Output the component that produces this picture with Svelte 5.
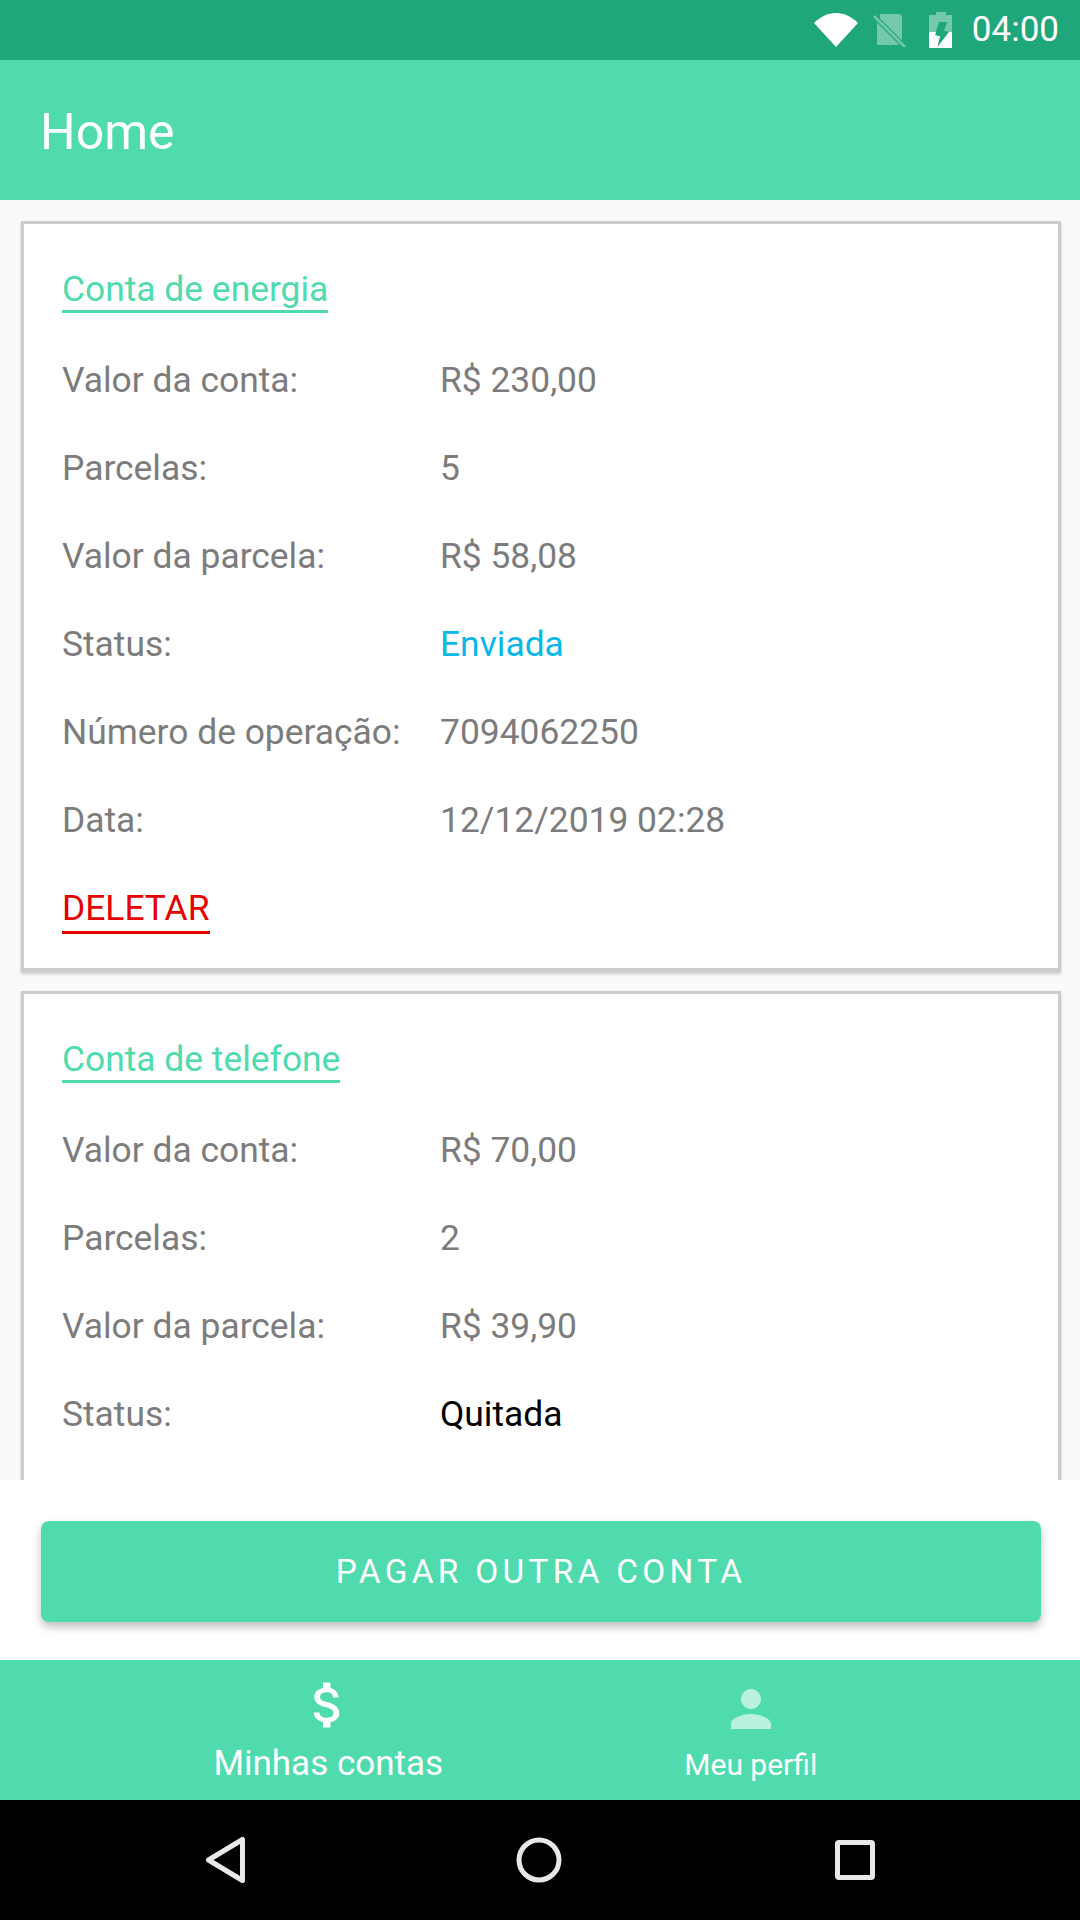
<script lang="ts">
  const bills = [
    {
      title: "Conta de energia",
      rows: [
        ["Valor da conta:", "R$ 230,00", ""],
        ["Parcelas:", "5", ""],
        ["Valor da parcela:", "R$ 58,08", ""],
        ["Status:", "Enviada", "sent"],
        ["Número de operação:", "7094062250", ""],
        ["Data:", "12/12/2019 02:28", ""],
      ],
      canDelete: true,
    },
    {
      title: "Conta de telefone",
      rows: [
        ["Valor da conta:", "R$ 70,00", ""],
        ["Parcelas:", "2", ""],
        ["Valor da parcela:", "R$ 39,90", ""],
        ["Status:", "Quitada", "paid"],
      ],
      canDelete: false,
    },
  ];
</script>

<div class="screen">
  <div class="statusbar">
    <svg class="wifi" viewBox="0 0 44 34"><path d="M0 10C6 4 13.500 0 22 0s16 4 22 10L22 34z" /></svg>
    <svg class="nosim" viewBox="0 0 33 33">
      <path d="M7 0H27l2 2V26.500L7 4.500z" />
      <path d="M4 8.500V31H26.500z" />
      <path d="M1 2l31 31" class="slash" />
    </svg>
    <svg class="battery" viewBox="0 0 23 36">
      <path fill-rule="evenodd" opacity=".38" d="M7 0h10v3h6v33H0V3h7zM10 10l-4 13.300 5 1-2.700 11L20 20l-5-1.300L18.300 10z" />
      <path d="M0 20H7L6 23.300 11 24.300 8.300 35.300 20 20H23V36H0z" />
    </svg>
    <span class="clock">04:00</span>
  </div>

  <header class="appbar">Home</header>

  <main class="list">
    {#each bills as bill}
      <section class="card">
        <h2 class="title"><span>{bill.title}</span></h2>
        {#each bill.rows as row}
          <div class="row">
            <span class="label">{row[0]}</span>
            <span class="value {row[2]}">{row[1]}</span>
          </div>
        {/each}
        {#if bill.canDelete}
          <div class="row"><span class="delete">DELETAR</span></div>
        {/if}
      </section>
    {/each}
  </main>

  <div class="action">
    <button class="pay">PAGAR OUTRA CONTA</button>
  </div>

  <nav class="tabs">
    <div class="tab active">
      <svg viewBox="0 0 24 24"><path d="M11.8 10.9c-2.270-.590-3-1.200-3-2.150 0-1.090 1.010-1.850 2.700-1.850 1.780 0 2.440.850 2.500 2.100h2.210c-.070-1.720-1.120-3.300-3.210-3.810V3h-3v2.160c-1.940.420-3.500 1.680-3.500 3.610 0 2.310 1.910 3.460 4.700 4.130 2.500.600 3 1.480 3 2.410 0 .690-.490 1.790-2.700 1.790-2.060 0-2.870-.920-2.980-2.100h-2.200c.120 2.190 1.760 3.420 3.680 3.830V21h3v-2.150c1.950-.370 3.500-1.500 3.500-3.550 0-2.840-2.430-3.810-4.700-4.400z" /></svg>
      <span>Minhas contas</span>
    </div>
    <div class="tab">
      <svg viewBox="0 0 24 24"><path d="M12 12c2.200 0 4-1.800 4-4s-1.800-4-4-4-4 1.800-4 4 1.800 4 4 4zM4 20v-2c0-2.700 5.300-4 8-4s8 1.300 8 4v2z" /></svg>
      <span>Meu perfil</span>
    </div>
  </nav>

  <div class="navbar">
    <svg viewBox="0 0 48 48"><path d="M40.500 3.500v41L6.500 24z" /></svg>
    <svg viewBox="0 0 48 48"><circle cx="24" cy="24" r="20" /></svg>
    <svg class="recents" viewBox="0 0 48 48"><rect x="6.500" y="6.500" width="35" height="35" rx="1.500" /></svg>
  </div>
</div>

<style>
  :global(body) {
    margin: 0;
    background: #fff;
  }

  .screen {
    width: 1080px;
    height: 1920px;
    display: flex;
    flex-direction: column;
    font-family: Roboto, sans-serif;
    overflow: hidden;
  }

  .statusbar {
    height: 60px;
    flex: none;
    background: #1fa67a;
    display: flex;
    align-items: center;
    justify-content: flex-end;
    padding-right: 21px;
    box-sizing: border-box;
  }

  .statusbar svg {
    fill: #fff;
    flex: none;
  }

  .wifi {
    width: 44px;
    height: 34px;
    margin-right: 15px;
  }

  .nosim {
    width: 33px;
    height: 33px;
    margin-right: 23px;
    opacity: 0.38;
  }

  .slash {
    stroke: #fff;
    stroke-width: 2.600;
    fill: none;
  }

  .battery {
    width: 23px;
    height: 36px;
    margin-right: 20px;
  }

  .clock {
    color: #fff;
    font-size: 35px;
    line-height: 62px;
  }

  .appbar {
    height: 140px;
    flex: none;
    background: #50dbae;
    color: #fff;
    font-size: 50px;
    line-height: 144px;
    padding-left: 40px;
    box-sizing: border-box;
  }

  .list {
    height: 1280px;
    flex: none;
    background: #fafafa;
    overflow: hidden;
    padding: 21px 19px 0 21px;
    box-sizing: border-box;
    display: flex;
    flex-direction: column;
    gap: 19px;
  }

  .card {
    flex: none;
    background: #fff;
    border: 3px solid #cccccc;
    border-bottom-width: 4px;
    box-shadow: 0 2px 3px rgba(0, 0, 0, 0.2);
    padding: 36px 38px 16px;
  }

  .card:last-child {
    padding-bottom: 60px;
  }

  .title {
    margin: 0 0 23px;
    font-size: 35.400px;
    font-weight: 400;
    color: #50dbae;
    height: 53px;
    line-height: 58px;
  }

  .title span {
    display: inline-block;
    height: 50px;
    border-bottom: 3px solid #50dbae;
  }

  .row {
    height: 88px;
    display: flex;
    align-items: center;
    font-size: 35.400px;
    color: #7c7c7c;
  }

  .label {
    width: 378px;
  }

  .sent {
    color: #0ab8e8;
  }

  .paid {
    color: #000;
  }

  .delete {
    color: #e60000;
    border-bottom: 3px solid #e60000;
    line-height: 46px;
    margin-top: 2px;
  }

  .action {
    height: 180px;
    flex: none;
    background: #fff;
    padding: 41px 39px 0 41px;
    box-sizing: border-box;
  }

  .pay {
    display: block;
    width: 100%;
    height: 101px;
    border: 0;
    border-radius: 8px;
    background: #50dbae;
    color: #fff;
    font-family: Roboto, sans-serif;
    font-size: 33.400px;
    letter-spacing: 4.300px;
    box-shadow: 0 5px 8px rgba(0, 0, 0, 0.25);
  }

  .tabs {
    height: 140px;
    flex: none;
    background: #50dbae;
    display: flex;
    padding: 0 118px 0 117px;
    box-sizing: border-box;
  }

  .tab {
    flex: 1;
    display: flex;
    flex-direction: column;
    align-items: center;
    color: #fff;
    font-size: 30px;
  }

  .tab svg {
    width: 60px;
    height: 60px;
    fill: #fff;
    opacity: 0.6;
    margin-top: 19px;
    margin-bottom: 8px;
  }

  .tab.active {
    font-size: 35px;
  }

  .tab.active svg {
    opacity: 1;
    margin-top: 15px;
    margin-bottom: 8px;
  }

  .navbar {
    height: 120px;
    flex: none;
    background: #000;
    display: flex;
    align-items: center;
    gap: 265px;
    padding-left: 202px;
    box-sizing: border-box;
  }

  .navbar svg {
    width: 48px;
    height: 48px;
    fill: none;
    stroke: #e8e8e8;
    stroke-width: 5;
    stroke-linejoin: round;
  }

  .recents {
    margin-left: 3px;
  }
</style>
